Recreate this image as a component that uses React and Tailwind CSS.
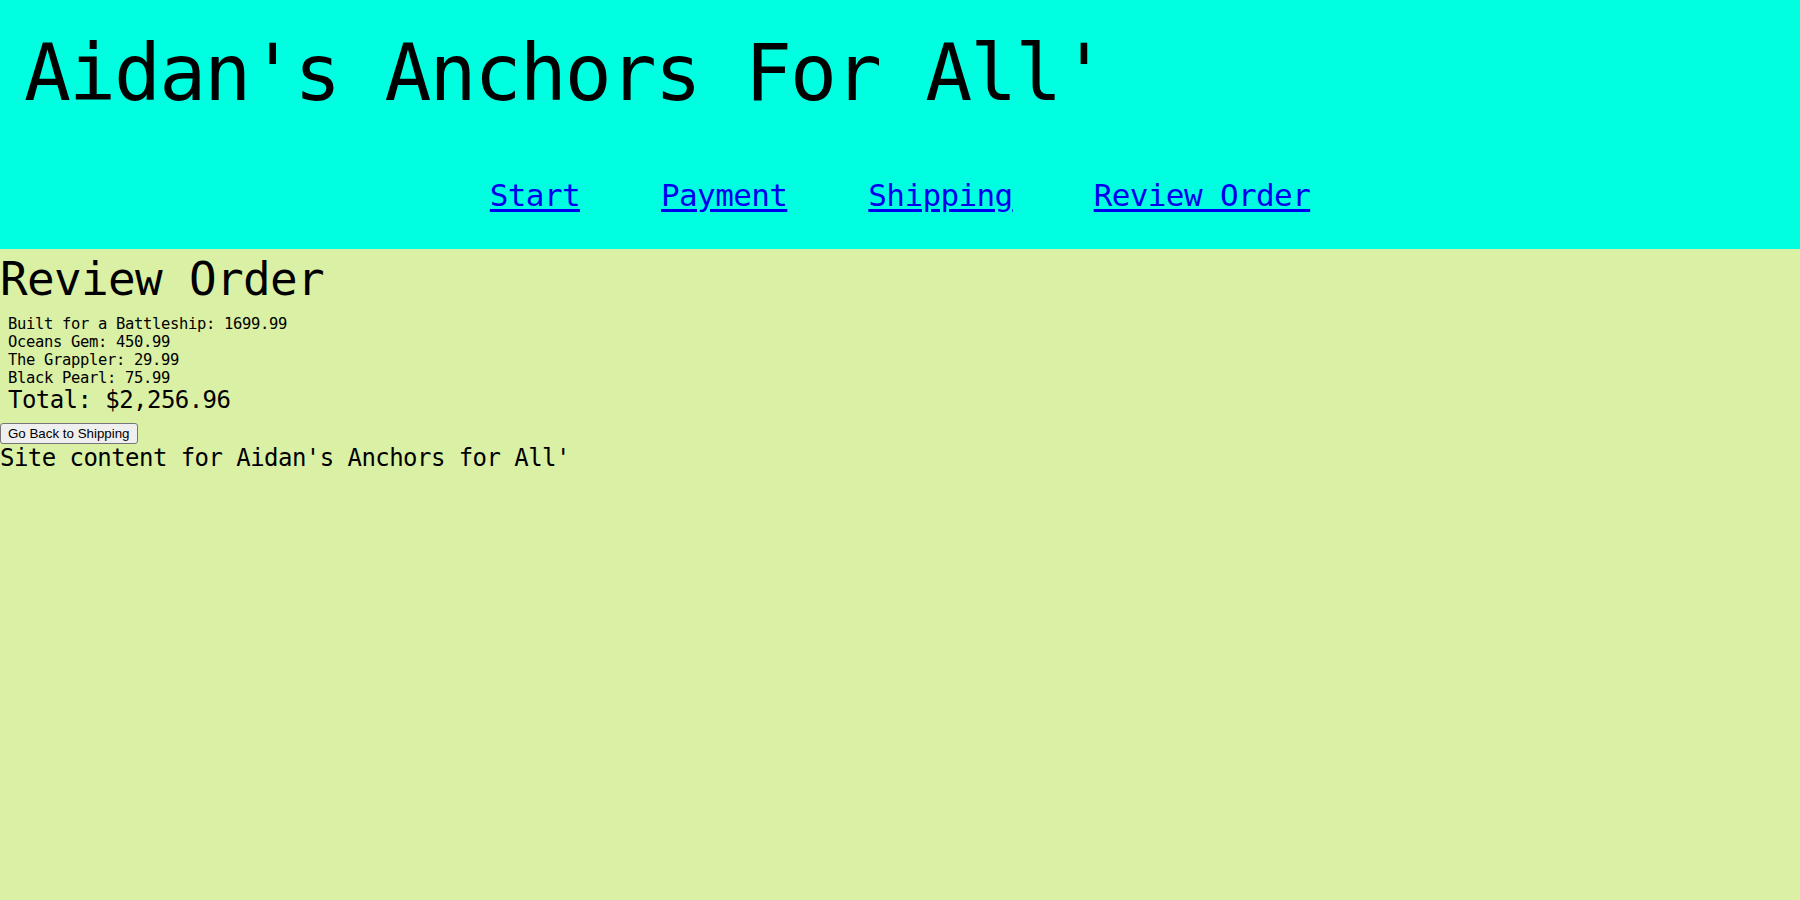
import React from 'react';

const mono = "font-['DejaVu_Sans_Mono','Liberation_Mono',monospace]";

const items = [
  { name: 'Built for a Battleship', price: 1699.99 },
  { name: 'Oceans Gem', price: 450.99 },
  { name: 'The Grappler', price: 29.99 },
  { name: 'Black Pearl', price: 75.99 },
];

const navLinks = ['Start', 'Payment', 'Shipping', 'Review Order'];

const App = () => {
  const total = items.reduce((sum, i) => sum + i.price, 0);

  return (
    <div className={`min-h-screen bg-[#daf0a4] text-black ${mono}`}>
      {/* header */}
      <header className="bg-[#00ffe1] pt-[34px] pb-[38px]">
        <h1 className="pl-[24px] text-[78px] leading-[78px] font-normal tracking-[-1.9px]">
          Aidan's Anchors For All'
        </h1>
        <nav className="mt-[68px] flex justify-center gap-[81px] text-[31px] leading-[31px] tracking-[-0.02em]">
          {navLinks.map((label) => (
            <a
              key={label}
              href="#"
              className="text-[#0000ee] underline decoration-[3px] underline-offset-[3px]"
            >
              {label}
            </a>
          ))}
        </nav>
      </header>

      {/* review order */}
      <main>
        <h2 className="mt-[7px] text-[46px] leading-[46px] font-normal tracking-[-0.015em]">
          Review Order
        </h2>
        <ul className="mt-[13px] pl-[8px] text-[15.5px] leading-[18px] tracking-[-0.33px]">
          {items.map((item) => (
            <li key={item.name}>
              {item.name}: {item.price}
            </li>
          ))}
        </ul>
        <p className="mt-px pl-[8px] text-[24px] leading-[24px] tracking-[-0.55px]">
          Total: ${total.toLocaleString('en-US', { minimumFractionDigits: 2, maximumFractionDigits: 2 })}
        </p>
        <button className="mt-[11px] block rounded-[3px] border border-[#767676] bg-[#efefef] px-[7px] py-[2px] font-['Liberation_Sans',Arial,sans-serif] text-[13.333px] leading-[15px] text-black">
          Go Back to Shipping
        </button>
        <p className="mt-[2px] text-[24px] leading-[24px] tracking-[-0.55px]">
          Site content for Aidan's Anchors for All'
        </p>
      </main>
    </div>
  );
};

export default App;
